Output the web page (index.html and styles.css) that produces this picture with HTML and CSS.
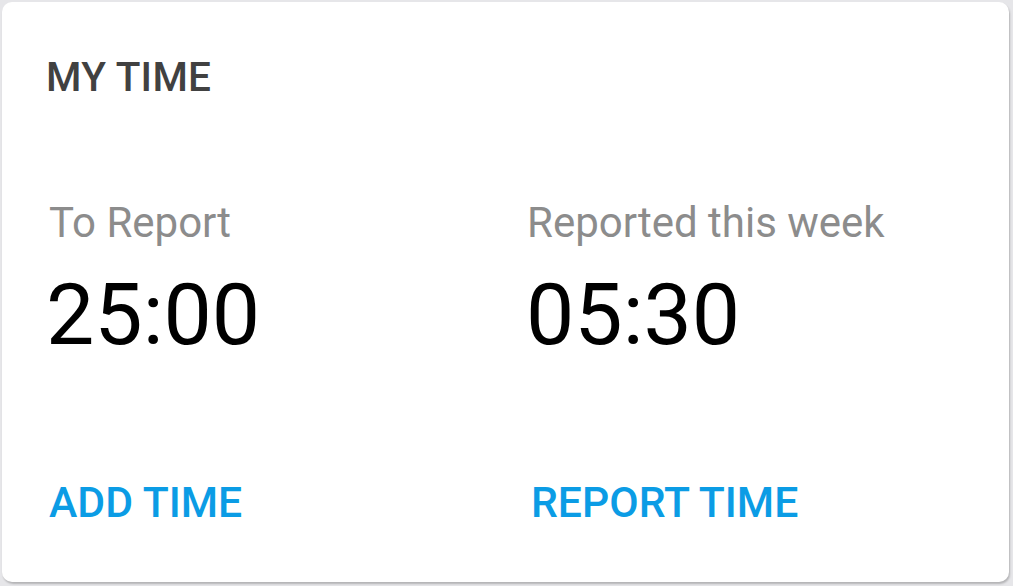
FILE: index.html
```html
<!DOCTYPE html>
<html lang="en">
<head>
  <meta charset="UTF-8" />
  <meta name="viewport" content="width=device-width, initial-scale=1.0" />
  <title>My Time</title>
  <link rel="stylesheet" href="styles.css">
</head>
<body>
  <div class="card">
    <h2 class="card-title">MY TIME</h2>
    <div class="stats">
      <div class="stat">
        <div class="stat-label">To Report</div>
        <div class="stat-value">25:00</div>
      </div>
      <div class="stat">
        <div class="stat-label">Reported this week</div>
        <div class="stat-value">05:30</div>
      </div>
    </div>
    <div class="actions">
      <button type="button" class="action">ADD TIME</button>
      <button type="button" class="action">REPORT TIME</button>
    </div>
  </div>
</body>
</html>
```

FILE: styles.css
```css
html, body { margin: 0; height: 100%; }
body { font-family: Roboto, "Liberation Sans", sans-serif; background: #e6e6e9; padding: 2px 4px 4px 2px; box-sizing: border-box; }
.card { height: 100%; box-sizing: border-box; background: #fff; border-radius: 10px; box-shadow: 1px 2px 2px rgba(0,0,0,0.22); padding: 51px 44px 0 44px; display: flex; flex-direction: column; }
.card-title { margin: 0; font-size: 40.5px; font-weight: 500; line-height: 48px; color: #414141; letter-spacing: 0.3px; }
.stats { display: grid; grid-template-columns: 480px 1fr; margin-top: 98px; }
.stat-label { font-size: 42px; line-height: 48px; color: #8c8c8c; padding-left: 3px; }
.stat + .stat .stat-label { padding-left: 1px; }
.stat-value { font-size: 86px; line-height: 100px; color: #000; margin-top: 18px; }
.actions { display: grid; grid-template-columns: 480px 1fr; margin-top: 113px; }
.action { justify-self: start; background: none; border: none; padding: 0 0 0 3px; font-family: inherit; font-size: 42.7px; font-weight: 500; line-height: 48px; color: #0b9ce5; cursor: pointer; }
.action + .action { padding-left: 5px; }
```
